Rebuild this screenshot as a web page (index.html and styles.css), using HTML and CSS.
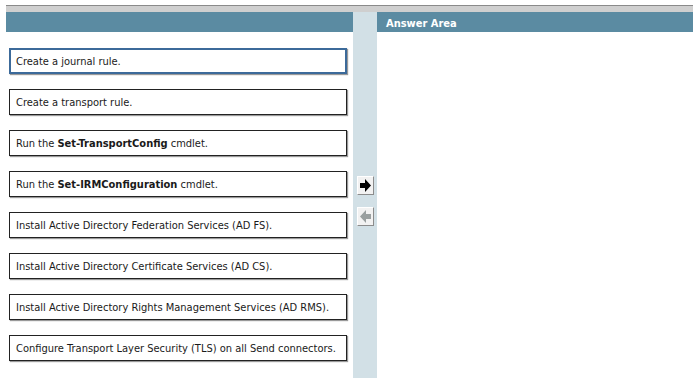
FILE: index.html
```html
<!DOCTYPE html>
<html lang="en">
<head>
  <meta charset="UTF-8">
  <title>Drag and Drop</title>
  <link rel="stylesheet" href="styles.css">
</head>
<body>
  <div class="frame">
    <div class="topbar"></div>
    <div class="panes">
      <div class="source">
        <div class="pane-header"></div>
        <div class="choices">
          <div class="choice selected">Create a journal rule.</div>
          <div class="choice">Create a transport rule.</div>
          <div class="choice">Run the <b>Set-TransportConfig</b> cmdlet.</div>
          <div class="choice">Run the <b>Set-IRMConfiguration</b> cmdlet.</div>
          <div class="choice">Install Active Directory Federation Services (AD FS).</div>
          <div class="choice">Install Active Directory Certificate Services (AD CS).</div>
          <div class="choice">Install Active Directory Rights Management Services (AD RMS).</div>
          <div class="choice">Configure Transport Layer Security (TLS) on all Send connectors.</div>
        </div>
      </div>
      <div class="divider">
        <div class="move-btn">
          <svg width="11" height="13" viewBox="0 0 11 13"><path d="M0 4h5V0l6 6.5L5 13V9H0z" fill="#000"/></svg>
        </div>
        <div class="move-btn disabled">
          <svg width="11" height="13" viewBox="0 0 11 13"><path d="M11 4H6V0L0 6.5 6 13V9h5z" fill="#9aa0a0"/></svg>
        </div>
      </div>
      <div class="answer">
        <div class="pane-header">Answer Area</div>
      </div>
    </div>
  </div>
</body>
</html>
```

FILE: styles.css
```css
:root {
  --header-blue: #5b8ba2;
  --divider: #d2e0e6;
}
body {
  margin: 0;
  background: #ffffff;
  font-family: Tahoma, "DejaVu Sans Condensed", "Liberation Sans", sans-serif;
  font-size: 11px;
  color: #1a1a1a;
}
.frame {
  margin-left: 6px;
  padding-top: 5px;
  width: 687px;
}
.topbar {
  height: 6px;
  background: #cfcfcf;
  border-top: 1px solid #8a8a8a;
}
.panes {
  display: flex;
  height: 366px;
}
.source {
  width: 347px;
}
.pane-header {
  height: 20px;
  background: var(--header-blue);
  color: #ffffff;
  font-weight: bold;
  font-size: 11px;
  line-height: 23px;
  padding-left: 9px;
}
.choices {
  display: flex;
  flex-direction: column;
  gap: 15px;
  padding: 16px 0 0 3px;
}
.choice {
  box-sizing: border-box;
  width: 338px;
  height: 26px;
  border: 1px solid #222;
  box-shadow: 1px 1px 1px #9a9a9a;
  padding: 0 6px;
  line-height: 25px;
  white-space: nowrap;
}
.choice.selected {
  border: 2px solid #3c6a9a;
  line-height: 23px;
  padding-left: 5px;
}
.divider {
  width: 24px;
  background: var(--divider);
  display: flex;
  flex-direction: column;
  align-items: center;
  gap: 12px;
  padding-top: 164px;
  box-sizing: border-box;
}
.move-btn {
  width: 17px;
  height: 19px;
  box-sizing: border-box;
  background: #f2f2f2;
  border: 1px solid #ffffff;
  border-right-color: #8c8c8c;
  border-bottom-color: #8c8c8c;
  display: flex;
  align-items: center;
  justify-content: center;
}
.answer {
  flex: 1;
}
```
